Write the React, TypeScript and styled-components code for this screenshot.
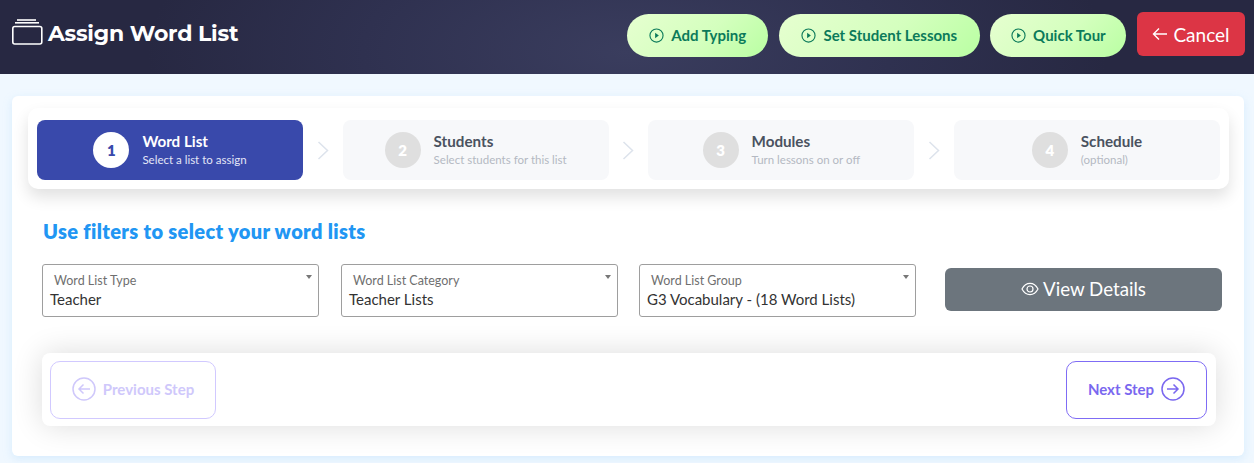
import React from "react";
import styled, { createGlobalStyle } from "styled-components";

const Global = createGlobalStyle`
  html, body { margin: 0; padding: 0; background: #f0f8ff; }
  body { font-family: "Lato", "Noto Sans", sans-serif; height: 463px; overflow: hidden; }
  * { box-sizing: border-box; }
`;

const Header = styled.header`
  height: 74px;
  display: flex;
  justify-content: space-between;
  padding: 12px 9px 0 12px;
  background: radial-gradient(ellipse 480px 200px at 50% 70%, #3a3d5e 0%, #2f3150 55%, #272842 100%);
`;
const TitleRow = styled.div`
  display: flex;
  align-items: flex-start;
  gap: 4px;
  padding-top: 7px;
`;
const Title = styled.h1`
  margin: 0;
  font-family: "Montserrat", "Inter", sans-serif;
  font-size: 22px;
  line-height: 30px;
  font-weight: 700;
  color: #fff;
  letter-spacing: -0.25px;
`;
const Actions = styled.div`
  display: flex;
  align-items: flex-start;
  gap: 10.6px;
`;
const Pill = styled.button<{ $w: number }>`
  width: ${(p) => p.$w}px;
  height: 43px;
  margin-top: 2px;
  padding-bottom: 2px;
  border: 0;
  border-radius: 22px;
  display: flex;
  align-items: center;
  justify-content: center;
  gap: 7px;
  background: linear-gradient(135deg, #e6ffd0 0%, #d4ffbe 55%, #b9ffa2 100%);
  color: #0b7a5a;
  font-family: "Lato", sans-serif;
  font-size: 15px;
  font-weight: 700;
`;
const Cancel = styled.button`
  width: 108px;
  height: 44px;
  border: 0;
  border-radius: 6px;
  background: #dc3545;
  color: #fff;
  font-family: "Lato", sans-serif;
  font-size: 19px;
  display: flex;
  align-items: center;
  justify-content: center;
  gap: 5px;
`;
const Main = styled.main`
  padding: 22px 10px 0 12px;
`;
const Card = styled.section`
  height: 360px;
  background: #fff;
  border-radius: 6px;
  padding: 12px 15px 0 16px;
  box-shadow: 0 3px 8px rgba(170, 215, 250, 0.35);
`;
const Stepper = styled.div`
  width: 1201px;
  height: 81px;
  padding: 12px 9px 9px;
  display: flex;
  align-items: center;
  justify-content: space-between;
  background: #fff;
  border-radius: 10px;
  box-shadow: 0 8px 16px rgba(0, 0, 0, 0.12);
`;
const Step = styled.div<{ $active?: boolean }>`
  width: 266px;
  height: 60px;
  border-radius: 8px;
  display: flex;
  align-items: center;
  justify-content: center;
  gap: 13px;
  background: ${(p) => (p.$active ? "#3949ab" : "#f7f8fa")};
`;
const Bullet = styled.span<{ $active?: boolean }>`
  width: 36px;
  height: 36px;
  border-radius: 50%;
  display: flex;
  align-items: center;
  justify-content: center;
  font-size: 15px;
  font-weight: 800;
  background: ${(p) => (p.$active ? "#fff" : "#dfdfdf")};
  color: ${(p) => (p.$active ? "#3949ab" : "#fff")};
`;
const StepText = styled.div`
  display: flex;
  flex-direction: column;
`;
const StepName = styled.span<{ $active?: boolean }>`
  font-size: 15.2px;
  line-height: 20px;
  font-weight: 700;
  color: ${(p) => (p.$active ? "#fff" : "#4a5260")};
`;
const StepSub = styled.span<{ $active?: boolean }>`
  font-size: 11.5px;
  line-height: 18px;
  color: ${(p) => (p.$active ? "#e3e6f7" : "#b4b9c2")};
`;
const Heading = styled.h2`
  margin: 30px 0 0 15px;
  font-size: 20px;
  line-height: 24px;
  font-weight: 800;
  letter-spacing: 0.35px;
  color: #2196f3;
`;
const Filters = styled.div`
  margin: 21px 0 0 14px;
  display: flex;
  align-items: flex-start;
`;
const Select = styled.div<{ $gap: number }>`
  position: relative;
  width: 277px;
  height: 53px;
  margin-right: ${(p) => p.$gap}px;
  padding: 8px 7px 0;
  border: 1px solid #9e9e9e;
  border-radius: 3px;
  background: #fff;
  &::after {
    content: "";
    position: absolute;
    right: 6px;
    top: 10px;
    border-left: 3.5px solid transparent;
    border-right: 3.5px solid transparent;
    border-top: 4px solid #777;
  }
`;
const SelectLabel = styled.div`
  font-size: 12.5px;
  line-height: 15px;
  color: #6f6f6f;
  padding-left: 4px;
`;
const SelectValue = styled.div`
  font-size: 15px;
  line-height: 20px;
  margin-top: 1px;
  color: #333;
`;
const Details = styled.button`
  width: 277px;
  height: 43px;
  margin-top: 4px;
  padding-bottom: 2px;
  border: 0;
  border-radius: 6px;
  background: #6c757d;
  color: #fff;
  font-family: "Lato", sans-serif;
  font-size: 18.7px;
  display: flex;
  align-items: center;
  justify-content: center;
  gap: 4px;
`;
const Nav = styled.div`
  margin: 36px 0 0 14px;
  width: 1174px;
  height: 73px;
  padding: 8px 9px 0 8px;
  display: flex;
  justify-content: space-between;
  align-items: flex-start;
  background: #fff;
  border-radius: 8px;
  box-shadow: 0 0 30px rgba(0, 0, 0, 0.14);
`;
const NavButton = styled.button<{ $off?: boolean; $w: number }>`
  width: ${(p) => p.$w}px;
  height: 58px;
  padding-bottom: 3px;
  border-radius: 10px;
  background: #fff;
  border: 1px solid ${(p) => (p.$off ? "#d1c9ff" : "#7f6cf5")};
  color: ${(p) => (p.$off ? "#cfc8fb" : "#7a67ef")};
  font-family: "Lato", sans-serif;
  font-size: 15px;
  font-weight: 700;
  display: flex;
  align-items: center;
  justify-content: center;
  gap: 7px;
`;

const PlayIcon = () => (
  <svg width="15" height="15" viewBox="0 0 16 16" fill="none" stroke="#0b7a5a" strokeWidth="1.2">
    <circle cx="8" cy="8" r="7" />
    <path d="M6.5 5l4 3-4 3z" fill="#0b7a5a" stroke="none" />
  </svg>
);
const StackIcon = () => (
  <svg width="32" height="28" viewBox="0 0 32 28" fill="none" stroke="#fff" strokeWidth="1.6">
    <rect x="0.8" y="7.5" width="29" height="17.500" rx="2" />
    <path d="M3 3.800h24" />
    <path d="M5 1h19" />
  </svg>
);
const ArrowLeft = () => (
  <svg width="16" height="14" viewBox="0 0 16 14" fill="none" stroke="#fff" strokeWidth="1.4">
    <path d="M15 7H1.5M7 1.5L1.500 7 7 12.500" />
  </svg>
);
const Eye = () => (
  <svg width="18" height="14" viewBox="0 0 18 14" fill="none" stroke="#fff" strokeWidth="1.2">
    <path d="M1 7c2-3.8 4.8-5.6 8-5.6S15 3.2 17 7c-2 3.8-4.800 5.600-8 5.600S3 10.800 1 7z" />
    <circle cx="9" cy="7" r="3" />
  </svg>
);
const Circled = ({ dir, color }: { dir: "l" | "r"; color: string }) => (
  <svg width="24" height="24" viewBox="0 0 24 24" fill="none" stroke={color} strokeWidth="1.5">
    <circle cx="12" cy="12" r="11" />
    {dir === "l" ? <path d="M18 12H7M11.500 7.500L7 12l4.500 4.500" /> : <path d="M6 12h11M12.500 7.500L17 12l-4.500 4.500" />}
  </svg>
);
const Chevron = () => (
  <svg width="12" height="19" viewBox="0 0 12 19" fill="none" stroke="#dde3ec" strokeWidth="1.5">
    <path d="M1.500 1l9 8.500-9 8.500" />
  </svg>
);

const steps = [
  { n: 1, name: "Word List", sub: "Select a list to assign" },
  { n: 2, name: "Students", sub: "Select students for this list" },
  { n: 3, name: "Modules", sub: "Turn lessons on or off" },
  { n: 4, name: "Schedule", sub: "(optional)" },
];
const selects = [
  { label: "Word List Type", value: "Teacher", gap: 22 },
  { label: "Word List Category", value: "Teacher Lists", gap: 21 },
  { label: "Word List Group", value: "G3 Vocabulary - (18 Word Lists)", gap: 29 },
];

export default function App() {
  return (
    <>
      <Global />
      <Header>
        <TitleRow>
          <StackIcon />
          <Title>Assign Word List</Title>
        </TitleRow>
        <Actions>
          <Pill $w={141}><PlayIcon />Add Typing</Pill>
          <Pill $w={201}><PlayIcon />Set Student Lessons</Pill>
          <Pill $w={136}><PlayIcon />Quick Tour</Pill>
          <Cancel><ArrowLeft />Cancel</Cancel>
        </Actions>
      </Header>
      <Main>
        <Card>
          <Stepper>
            {steps.map((s, i) => (
              <React.Fragment key={s.n}>
                {i > 0 && <Chevron />}
                <Step $active={i === 0}>
                  <Bullet $active={i === 0}>{s.n}</Bullet>
                  <StepText>
                    <StepName $active={i === 0}>{s.name}</StepName>
                    <StepSub $active={i === 0}>{s.sub}</StepSub>
                  </StepText>
                </Step>
              </React.Fragment>
            ))}
          </Stepper>
          <Heading>Use filters to select your word lists</Heading>
          <Filters>
            {selects.map((s) => (
              <Select key={s.label} $gap={s.gap}>
                <SelectLabel>{s.label}</SelectLabel>
                <SelectValue>{s.value}</SelectValue>
              </Select>
            ))}
            <Details><Eye />View Details</Details>
          </Filters>
          <Nav>
            <NavButton $off $w={166}><Circled dir="l" color="#cfc8fb" />Previous Step</NavButton>
            <NavButton $w={141}>Next Step<Circled dir="r" color="#7a67ef" /></NavButton>
          </Nav>
        </Card>
      </Main>
    </>
  );
}
